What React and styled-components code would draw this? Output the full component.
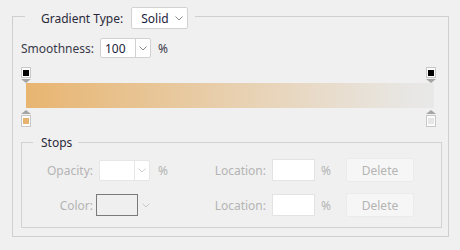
import React from 'react';
import styled, { createGlobalStyle } from 'styled-components';

const GlobalStyle = createGlobalStyle`
  body {
    margin: 0;
    background: #f0f0f0;
    font-family: "Noto Sans", "Open Sans", sans-serif;
    font-size: 12px;
    color: #333;
  }
`;

const Page = styled.div`
  width: 460px;
  height: 250px;
  box-sizing: border-box;
  padding: 16px 0 0 12px;
`;

const Frame = styled.div`
  width: 437px;
  box-sizing: border-box;
  border: 1px solid #cfcfcf;
  padding-bottom: 8px;
`;

const Legend = styled.div`
  display: flex;
  align-items: center;
  width: fit-content;
  height: 22px;
  margin: -10px 0 0 12px;
  padding: 0 7px 0 16px;
  gap: 8px;
  background: #f0f0f0;
  color: #2a2a3a;
`;

const Select = styled.div`
  display: flex;
  align-items: center;
  justify-content: space-between;
  box-sizing: border-box;
  width: 57px;
  height: 22px;
  padding: 0 4px 0 9px;
  background: #fff;
  border: 1px solid #d2d2d2;
  border-radius: 2px;
  color: #1c1c3c;
`;

const Row = styled.div`
  display: flex;
  align-items: center;
  height: 20px;
  margin: 9px 0 0 8px;
  color: #3a3a4a;
`;

const RowLabel = styled.span`
  width: 79px;
`;

const Combo = styled.div`
  display: flex;
  box-sizing: border-box;
  width: 51px;
  height: ${(p) => (p.$disabled ? '21px' : '20px')};
  background: #fff;
  border: 1px solid ${(p) => (p.$disabled ? '#e6e6e6' : '#d2d2d2')};
  border-radius: 2px;
  color: #1c1c3c;
`;

const ComboValue = styled.span`
  flex: 1;
  display: flex;
  align-items: center;
  padding-left: 4px;
  border-right: 1px solid ${(p) => (p.$disabled ? '#e6e6e6' : '#d2d2d2')};
`;

const ComboArrow = styled.span`
  width: 14px;
  display: flex;
  align-items: center;
  justify-content: center;
`;

const DropArrow = styled.span`
  display: flex;
  margin-left: 4px;
`;

const Percent = styled.span`
  margin-left: 7px;
  color: #3a3a4a;
`;

const MarkerRow = styled.div`
  display: flex;
  justify-content: space-between;
  margin-top: ${(p) => p.$top}px;
  padding: 0 12px 0 8px;
`;

const Marker = styled.div`
  display: flex;
  flex-direction: ${(p) => (p.$below ? 'column-reverse' : 'column')};
  align-items: center;
  width: 10px;
`;

const MarkerBox = styled.div`
  box-sizing: border-box;
  width: 10px;
  height: ${(p) => (p.$below ? 12 : 11)}px;
  margin-${(p) => (p.$below ? 'top' : 'bottom')}: 1px;
  display: flex;
  align-items: center;
  justify-content: center;
  background: #fbfbfb;
  border: 1px solid #c8c8c8;
`;

const Swatch = styled.div`
  width: 6px;
  height: 6px;
  background: ${(p) => p.$color};
`;

const Arrow = styled.div`
  width: 0;
  height: 0;
  border-left: 5px solid transparent;
  border-right: 5px solid transparent;
  ${(p) => (p.$up ? 'border-bottom' : 'border-top')}: 4px solid #a5a5a5;
`;

const GradientBar = styled.div`
  width: 408px;
  height: 25px;
  margin-left: 13px;
  background: linear-gradient(to right, #e8b571, #e8e7e5 95%, #e8e8e8);
`;

const Stops = styled.div`
  margin: 15px 6px 0 8px;
  border: 1px solid #d2d2d2;
  padding-bottom: 10px;
`;

const StopsLegend = styled.div`
  width: fit-content;
  height: 17px;
  line-height: 17px;
  margin: -9px 0 0 11px;
  padding: 0 6px 0 8px;
  background: #f0f0f0;
  color: #2a2a3a;
`;

const StopsGrid = styled.div`
  display: grid;
  grid-template-columns: 74px 54px 24px 95px 46px 31px 68px;
  grid-auto-rows: 24px;
  row-gap: 11px;
  align-items: center;
  margin-top: 7px;
  color: #b4b4b4;
`;

const Label = styled.span`
  text-align: right;
  padding-right: 3px;
`;

const Cell = styled.div`
  display: flex;
  align-items: center;
  justify-content: ${(p) => (p.$end ? 'flex-end' : 'flex-start')};
  padding-left: ${(p) => p.$pad || 0}px;
`;

const TextInput = styled.div`
  box-sizing: border-box;
  width: 43px;
  height: 22px;
  background: #fff;
  border: 1px solid #e3e3e3;
`;

const ColorBox = styled.div`
  box-sizing: border-box;
  width: 45px;
  height: 22px;
  border: 1px solid #7a7a7a;
  background: #efefef;
`;

const Button = styled.div`
  box-sizing: border-box;
  width: 68px;
  height: 24px;
  display: flex;
  align-items: center;
  justify-content: center;
  background: #f6f6f6;
  border: 1px solid #ebebeb;
  border-radius: 2px;
  color: #b4b4b4;
`;

const Chevron = ({ color = '#8a8a8a' }) => (
  <svg width="8" height="5" viewBox="0 0 8 5">
    <path d="M0.5 0.5 L4 4 L7.5 0.5" fill="none" stroke={color} strokeWidth="1" />
  </svg>
);

const StopMarker = ({ color, below }) => (
  <Marker $below={below}>
    <MarkerBox $below={below}>
      <Swatch $color={color} />
    </MarkerBox>
    <Arrow $up={below} />
  </Marker>
);

const LocationCells = () => (
  <>
    <Label>Location:</Label>
    <Cell $end>
      <TextInput />
    </Cell>
    <Cell $pad={6}>%</Cell>
    <Button>Delete</Button>
  </>
);

export default function App() {
  return (
    <>
      <GlobalStyle />
      <Page>
        <Frame>
          <Legend>
            <span>Gradient Type:</span>
            <Select>
              <span>Solid</span>
              <Chevron />
            </Select>
          </Legend>
          <Row>
            <RowLabel>Smoothness:</RowLabel>
            <Combo>
              <ComboValue>100</ComboValue>
              <ComboArrow>
                <Chevron />
              </ComboArrow>
            </Combo>
            <Percent>%</Percent>
          </Row>
          <MarkerRow $top={9}>
            <StopMarker color="#000" />
            <StopMarker color="#000" />
          </MarkerRow>
          <GradientBar />
          <MarkerRow $top={2}>
            <StopMarker color="#e5b36e" below />
            <StopMarker color="#e6e6e6" below />
          </MarkerRow>
          <Stops>
            <StopsLegend>Stops</StopsLegend>
            <StopsGrid>
              <Label>Opacity:</Label>
              <Cell $end>
                <Combo $disabled>
                  <ComboValue $disabled />
                  <ComboArrow>
                    <Chevron color="#cfcfcf" />
                  </ComboArrow>
                </Combo>
              </Cell>
              <Cell $pad={8}>%</Cell>
              <LocationCells />

              <Label>Color:</Label>
              <Cell>
                <ColorBox />
                <DropArrow>
                  <Chevron color="#c8c8c8" />
                </DropArrow>
              </Cell>
              <span />
              <LocationCells />
            </StopsGrid>
          </Stops>
        </Frame>
      </Page>
    </>
  );
}
